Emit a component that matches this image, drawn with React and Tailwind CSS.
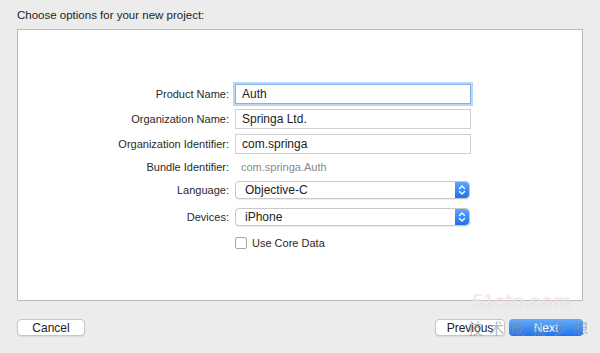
import React from "react";

function Stepper() {
  return (
    <div className="flex h-full w-[14px] items-center justify-center rounded-r-[4px] bg-gradient-to-b from-[#5da6fb] to-[#1b6ff0]">
      <svg width="8" height="12" viewBox="0 0 8 12" fill="none" stroke="white" strokeWidth="1.3" strokeLinecap="round" strokeLinejoin="round">
        <path d="M1.5 4.5 L4 2 L6.5 4.5" />
        <path d="M1.5 7.5 L4 10 L6.5 7.5" />
      </svg>
    </div>
  );
}

function Popup({ value }) {
  return (
    <div className="flex h-[18px] w-[235px] items-center rounded-[4px] border border-[#c8c8c8] bg-white shadow-[0_1px_1px_rgba(0,0,0,0.08)]">
      <span className="flex-1 pl-[9px] text-[12px] text-[#222]">{value}</span>
      <Stepper />
    </div>
  );
}

function Label({ children }) {
  return <div className="w-[120px] text-right text-[11px] text-[#2a2a2a]">{children}</div>;
}

export default function App() {
  return (
    <div
      className="relative flex h-[353px] w-[600px] flex-col bg-[#ececec] text-[#222]"
      style={{ fontFamily: '"Liberation Sans", Arial, sans-serif' }}
    >
      <div className="pl-[17px] pt-[8px] text-[11.5px] leading-[14px] text-[#1d1d1d]">
        Choose options for your new project:
      </div>
      <div className="ml-[17px] mt-[7px] h-[272px] w-[566px] border border-[#b9b9b9] bg-white">
        <div className="ml-[91px] flex flex-col pt-[54px]">
          <div className="flex items-center gap-[6px]">
            <Label>Product Name:</Label>
            <div className="flex h-[20px] w-[236px] items-center border border-[#84b3e6] pl-[6px] text-[12px] shadow-[0_0_0_2px_rgba(130,180,235,0.55)]">
              Auth
            </div>
          </div>
          <div className="mt-[5px] flex items-center gap-[6px]">
            <Label>Organization Name:</Label>
            <div className="flex h-[20px] w-[236px] items-center border border-[#d0d0d0] pl-[6px] text-[12px]">
              Springa Ltd.
            </div>
          </div>
          <div className="mt-[5px] flex items-center gap-[6px]">
            <Label>Organization Identifier:</Label>
            <div className="flex h-[20px] w-[236px] items-center border border-[#d0d0d0] pl-[6px] text-[12px]">
              com.springa
            </div>
          </div>
          <div className="mt-[6px] flex h-[14px] items-center gap-[6px]">
            <Label>Bundle Identifier:</Label>
            <div className="pl-[6px] text-[11px] text-[#8a8a8a]">com.springa.Auth</div>
          </div>
          <div className="mt-[7px] flex items-center gap-[6px]">
            <Label>Language:</Label>
            <Popup value="Objective-C" />
          </div>
          <div className="mt-[9px] flex items-center gap-[6px]">
            <Label>Devices:</Label>
            <Popup value="iPhone" />
          </div>
          <div className="mt-[9px] flex items-center gap-[6px]">
            <div className="w-[120px]" />
            <div className="flex items-center gap-[5px]">
              <div className="h-[12px] w-[12px] rounded-[2px] border border-[#a8a8a8] bg-white" />
              <span className="text-[11px] text-[#2a2a2a]">Use Core Data</span>
            </div>
          </div>
        </div>
      </div>
      <div className="mt-[18px] flex items-center px-[17px]">
        <div className="flex h-[17px] w-[68px] items-center justify-center rounded-[4px] border border-[#c6c6c6] bg-white text-[12px] text-[#222] shadow-[0_1px_1px_rgba(0,0,0,0.08)]">
          Cancel
        </div>
        <div className="flex-1" />
        <div className="flex h-[17px] w-[70px] items-center justify-center rounded-[4px] border border-[#c6c6c6] bg-white text-[12px] text-[#222] shadow-[0_1px_1px_rgba(0,0,0,0.08)]">
          Previous
        </div>
        <div className="ml-[4px] flex h-[17px] w-[74px] items-center justify-center rounded-[4px] bg-gradient-to-b from-[#64acfc] to-[#1c72f0] text-[12px] text-white">
          Next
        </div>
      </div>
      <div className="pointer-events-none absolute left-[472px] top-[291px] text-[20px] font-bold leading-none text-[#f1e2e2] opacity-70">
        51cto.com
      </div>
      <div
        className="pointer-events-none absolute left-[468px] top-[320px] text-[15px] leading-none tracking-[6px] text-[#7f8fa6] opacity-60"
        style={{ fontFamily: '"Noto Sans CJK SC", sans-serif' }}
      >
        技术成就梦想
      </div>
    </div>
  );
}
